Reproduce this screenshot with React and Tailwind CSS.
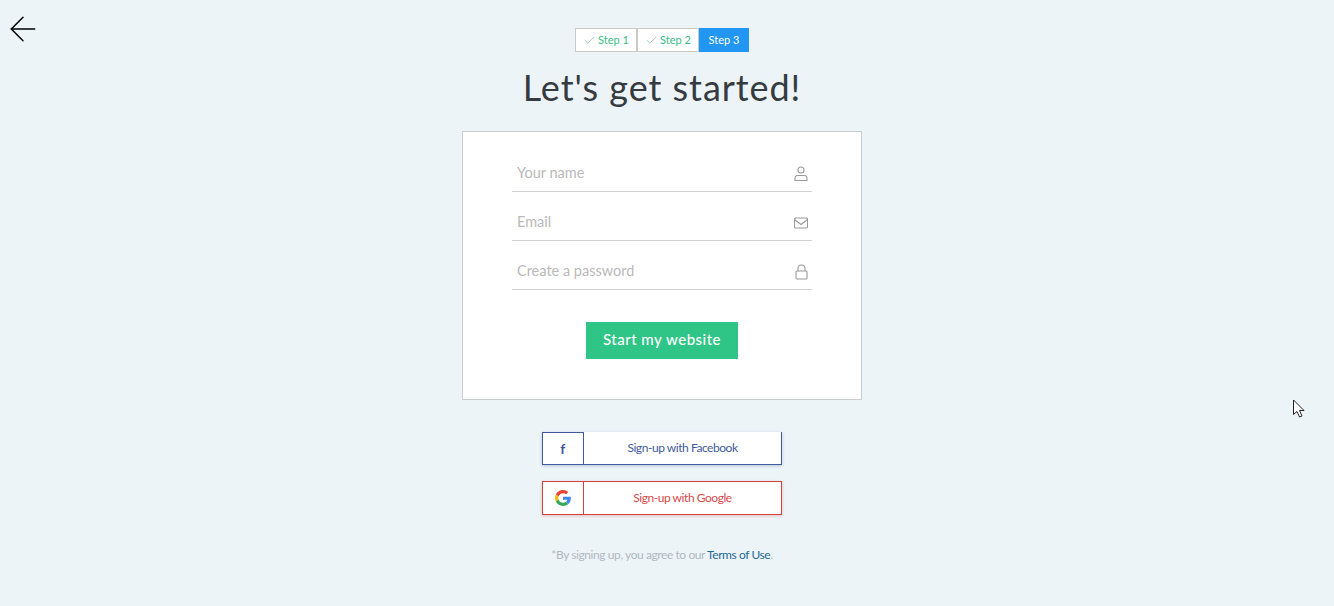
import { Check, ArrowLeft } from 'lucide-react';

const fields = [
  { label: 'Your name', icon: 'user' },
  { label: 'Email', icon: 'mail' },
  { label: 'Create a password', icon: 'lock' },
];

const FieldIcon = ({ type }) => {
  if (type === 'user') {
    return (
      <svg width="14" height="16" viewBox="0 0 14 16" fill="none" stroke="#9a9a9a" strokeWidth="1.1">
        <circle cx="7" cy="4" r="3" />
        <path d="M3.5 9.500h7a2.500 2.500 0 0 1 2.500 2.500v2.500H1V12a2.500 2.500 0 0 1 2.500-2.500z" />
      </svg>
    );
  }
  if (type === 'mail') {
    return (
      <svg width="14" height="12" viewBox="0 0 14 12" fill="none" stroke="#9a9a9a" strokeWidth="1.1">
        <rect x="0.5" y="1" width="13" height="10" rx="1" />
        <path d="M0.5 2.500 7 7.500l6.500-5" />
      </svg>
    );
  }
  return (
    <svg width="13" height="16" viewBox="0 0 13 16" fill="none" stroke="#9a9a9a" strokeWidth="1.1">
      <rect x="1" y="7" width="11" height="8" rx="1" />
      <path d="M3 7V4.500a3.500 3.500 0 0 1 7 0V7" />
    </svg>
  );
};

const GoogleLogo = () => (
  <svg width="16" height="16" viewBox="0 0 48 48">
    <path fill="#EA4335" d="M24 9.500c3.500 0 6.700 1.200 9.200 3.600l6.900-6.900C35.900 2.400 30.500 0 24 0 14.600 0 6.500 5.400 2.600 13.200l8 6.200C12.500 13.600 17.800 9.500 24 9.500z" />
    <path fill="#4285F4" d="M47.500 24.500c0-1.600-.1-3.100-.4-4.500H24v9h13.200c-.6 3-2.300 5.500-4.800 7.200l7.700 6c4.500-4.200 7.400-10.300 7.400-17.700z" />
    <path fill="#FBBC05" d="M10.600 28.600c-.5-1.400-.8-3-.8-4.600s.3-3.200.8-4.600l-8-6.200C.9 16.500 0 20.100 0 24s.9 7.500 2.600 10.800l8-6.200z" />
    <path fill="#34A853" d="M24 48c6.500 0 11.900-2.100 15.900-5.800l-7.700-6c-2.200 1.400-4.900 2.300-8.200 2.300-6.200 0-11.500-4.100-13.400-9.900l-8 6.200C6.500 42.600 14.600 48 24 48z" />
  </svg>
);

export default function App() {
  return (
    <div className="relative h-[606px] overflow-hidden bg-[#edf4f8] pr-[10px] font-['Lato',sans-serif]">
      <button className="absolute left-[3px] top-[9px] text-black">
        <ArrowLeft size={40} strokeWidth={0.9} />
      </button>

      <div className="flex flex-col items-center pt-[28px]">
        {/* Steps */}
        <div className="flex h-[24px] text-[11px]">
          <div className="flex w-[62px] items-center justify-center gap-[2px] border border-[#c9c9c9] bg-white text-[#38bd85]">
            <Check size={13} strokeWidth={1.3} className="text-[#7fb89c]" />
            Step 1
          </div>
          <div className="flex w-[62px] items-center justify-center gap-[2px] border border-[#c9c9c9] bg-white text-[#38bd85]">
            <Check size={13} strokeWidth={1.3} className="text-[#7fb89c]" />
            Step 2
          </div>
          <div className="flex w-[50px] items-center justify-center bg-[#2196f3] text-white">Step 3</div>
        </div>

        <h1 className="mt-[12px] text-[36px] leading-[46px] tracking-[0.95px] text-[#353b40]">Let's get started!</h1>

        {/* Form card */}
        <div className="mt-[21px] flex h-[269px] w-[400px] flex-col items-center border border-[#c8cdd0] bg-white px-[49px] pt-[20px]">
          <div className="flex w-full flex-col gap-[9px]">
            {fields.map((field) => (
              <div
                key={field.label}
                className="flex h-[40px] items-end justify-between border-b border-[#d2d2d2] pb-[8px] pl-[5px] pr-[4px] text-[14.500px] leading-[20px] text-[#b9b9b9]"
              >
                <span>{field.label}</span>
                <span className="flex h-[18px] items-center">
                  <FieldIcon type={field.icon} />
                </span>
              </div>
            ))}
          </div>
          <button className="mt-[32px] h-[37px] w-[152px] bg-[#2fc586] pb-[2px] text-[15px] font-medium tracking-[0.5px] text-white">
            Start my website
          </button>
        </div>

        {/* Social sign-up */}
        <div className="mt-[32px] flex w-[240px] flex-col gap-[16px] text-[12px] tracking-[-0.45px]">
          <a className="flex h-[33px] border border-t-0 border-[#3f5b9b] bg-white text-[#3f5b9b] shadow-[0_1px_3px_rgba(59,89,152,0.3)]">
            <span className="flex w-[41px] items-center justify-center border-r border-t border-[#3f5b9b] pr-[1px] text-[14px] font-bold">f</span>
            <span className="flex flex-1 items-center justify-center">Sign-up with Facebook</span>
          </a>
          <a className="flex h-[34px] border border-[#d2413a] bg-white text-[#d6494a] shadow-[0_1px_3px_rgba(210,65,58,0.3)]">
            <span className="flex w-[41px] items-center justify-center border-r border-[#d2413a] pr-[1px]">
              <GoogleLogo />
            </span>
            <span className="flex flex-1 items-center justify-center">Sign-up with Google</span>
          </a>
        </div>

        <p className="mt-[32px] text-[12px] leading-[16px] tracking-[-0.42px] text-[#b0b8c0]">
          *By signing up, you agree to our <a className="text-[#1f6a94]">Terms of Use</a>.
        </p>
      </div>

      {/* Mouse pointer */}
      <svg className="absolute left-[1292px] top-[399px]" width="14" height="20" viewBox="0 0 14 20" fill="white" stroke="#222" strokeWidth="1">
        <path d="M1.500 1v14.500l3.500-3 2.500 5.500 2.500-1-2.500-5.500h4.500z" />
      </svg>
    </div>
  );
}
